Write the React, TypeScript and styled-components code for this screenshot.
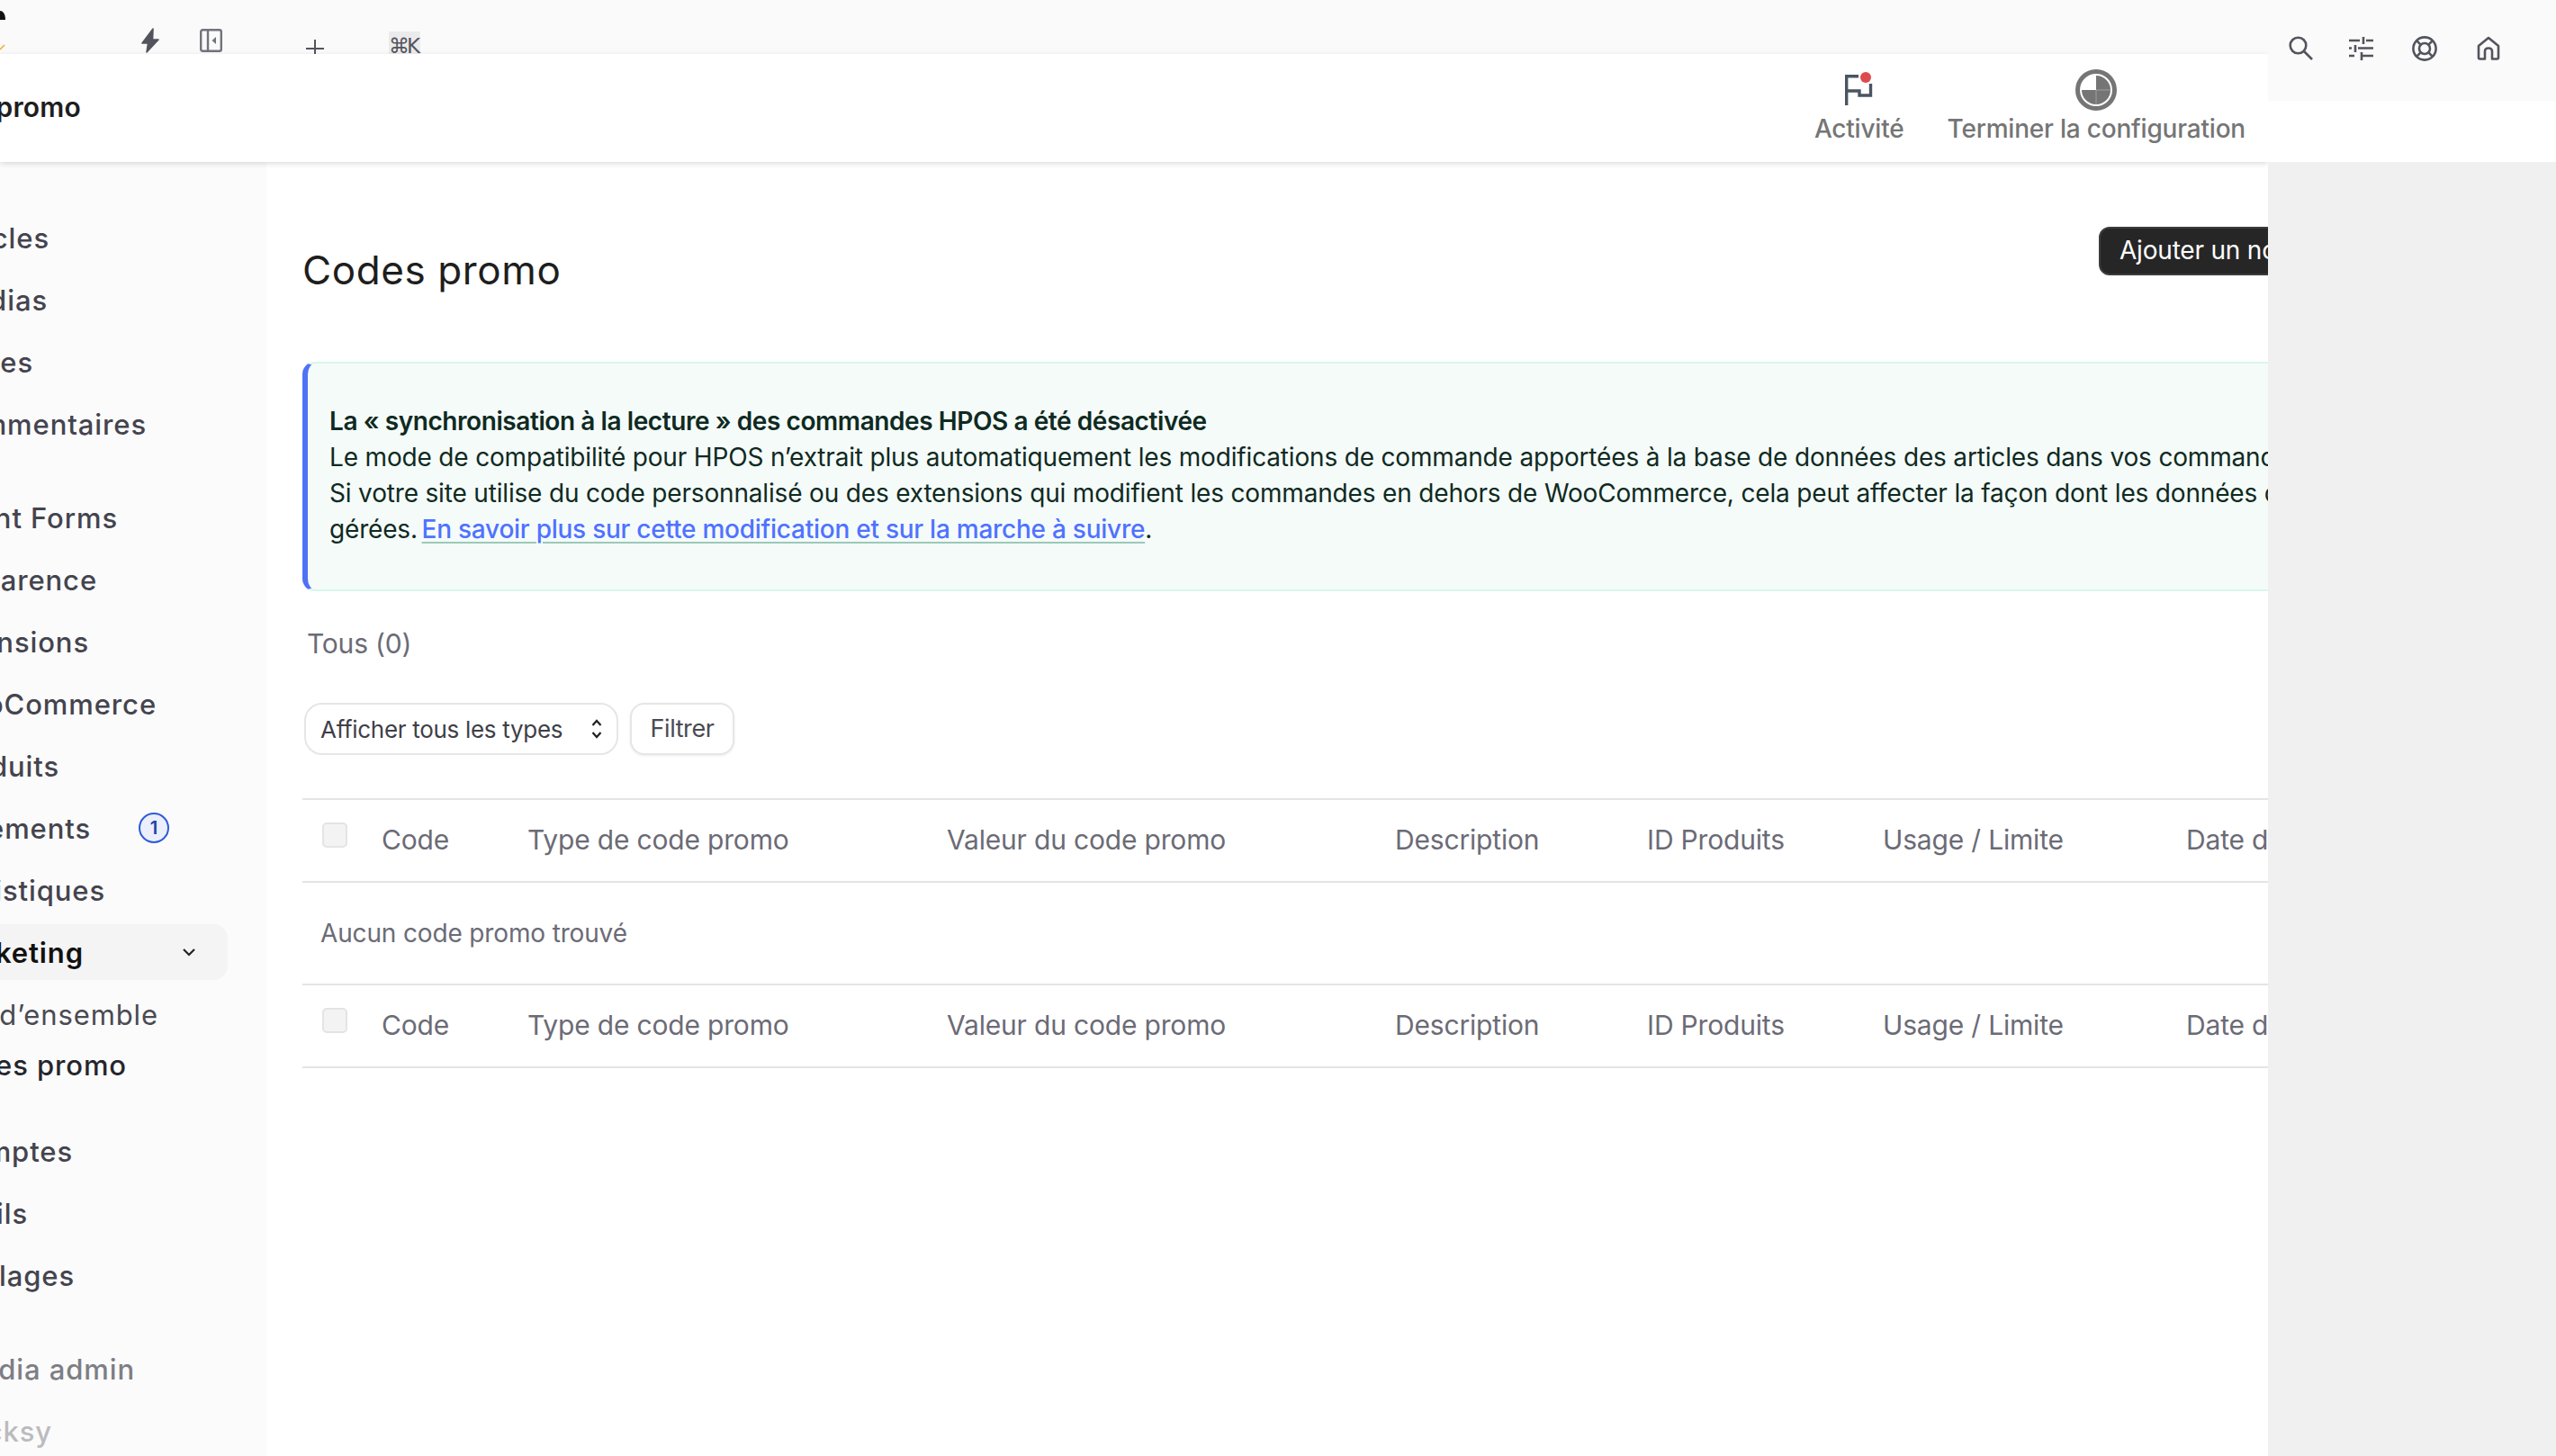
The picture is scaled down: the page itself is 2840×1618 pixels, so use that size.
import React from 'react'
import styled, { createGlobalStyle } from 'styled-components'

const FONT = `Inter, 'Noto Sans', 'Liberation Sans', sans-serif`

const GlobalStyle = createGlobalStyle`
  html, body {
    margin: 0;
    padding: 0;
    background: #f0f0f0;
  }
  body {
    font-family: ${FONT};
    overflow: hidden;
  }
  * {
    box-sizing: border-box;
  }
`

const Page = styled.div`
  display: flex;
  width: 2840px;
  height: 1618px;
  overflow: hidden;
`

const Frame = styled.div`
  flex: 0 0 2520px;
  display: flex;
  flex-direction: column;
  overflow: hidden;
  background: #fff;
`

const TopStrip = styled.div`
  flex: 0 0 60px;
  display: flex;
  align-items: flex-start;
  overflow: hidden;
  background: #fafafa;
`

const StripSlot = styled.div<{ $left: number; $top: number }>`
  flex: none;
  margin-left: ${p => p.$left}px;
  margin-top: ${p => p.$top}px;
  display: flex;
  color: #54545e;
`

const KeyHint = styled.span`
  flex: none;
  margin-left: 72px;
  margin-top: 35px;
  width: 35px;
  height: 40px;
  background: #ebebeb;
  color: #54545e;
  font-size: 23px;
  line-height: 32px;
  text-align: left;
  white-space: nowrap;
  font-family: 'DejaVu Sans', sans-serif;
  letter-spacing: -3px;
`

const Header = styled.header`
  flex: 0 0 120px;
  position: relative;
  z-index: 2;
  display: flex;
  align-items: center;
  justify-content: space-between;
  padding-right: 25px;
  background: #fff;
  box-shadow: 0 2px 6px rgba(0, 0, 0, 0.14);
`

const HeaderTitle = styled.div`
  display: flex;
  justify-content: flex-end;
  width: 90px;
  margin-top: -2px;
  white-space: nowrap;
  font-size: 30px;
  font-weight: 600;
  letter-spacing: 0.2px;
  color: #1e1e1e;
`

const HeaderActions = styled.div`
  display: flex;
  align-items: flex-end;
  gap: 48px;
`

const HeaderAction = styled.div`
  display: flex;
  flex-direction: column;
  align-items: center;
`

const ActionLabel = styled.span`
  font-size: 28px;
  line-height: 40px;
  font-weight: 500;
  letter-spacing: -0.2px;
  color: #757575;
  white-space: nowrap;
`

const Body = styled.div`
  flex: 1;
  display: flex;
  min-height: 0;
`

const Sidebar = styled.nav`
  flex: 0 0 296px;
  padding-top: 53px;
  background: #fbfbfb;
  overflow: hidden;
`

const NavGroup = styled.div`
  margin-bottom: 42px;
  display: flex;
  flex-direction: column;
  gap: 7px;
`

const NavItem = styled.div<{ $active?: boolean; $tone?: string }>`
  width: 253px;
  height: 62px;
  display: flex;
  align-items: center;
  border-radius: 0 16px 16px 0;
  font-size: 31px;
  font-weight: ${p => (p.$active ? 600 : 500)};
  letter-spacing: 0.9px;
  color: ${p => p.$tone || '#44444e'};
  background: ${p => (p.$active ? '#f4f4f4' : 'transparent')};
`

const NavLabel = styled.span<{ $end: number }>`
  flex: none;
  display: flex;
  justify-content: flex-end;
  width: ${p => p.$end}px;
  white-space: nowrap;
`

const NavBadge = styled.span`
  flex: none;
  margin-left: auto;
  margin-right: 65px;
  width: 34px;
  height: 34px;
  display: flex;
  align-items: center;
  justify-content: center;
  border: 2px solid #2f5bd8;
  border-radius: 50%;
  background: #eaeffb;
  color: #1d3fa8;
  font-size: 20px;
  font-weight: 600;
  letter-spacing: 0;
`

const NavChevron = styled.svg`
  flex: none;
  margin-left: auto;
  margin-right: 34px;
`

const SubList = styled.div`
  margin-top: 3px;
  margin-bottom: -5px;
`

const SubItem = styled.div<{ $current?: boolean }>`
  width: 253px;
  height: 56px;
  display: flex;
  align-items: center;
  font-size: 31px;
  font-weight: ${p => (p.$current ? 500 : 400)};
  letter-spacing: 0.9px;
  color: ${p => (p.$current ? '#26262c' : '#4a4a52')};
`

const Content = styled.main`
  flex: none;
  width: 2470px;
  margin-left: 40px;
  padding-top: 72px;
`

const TitleRow = styled.div`
  display: flex;
  align-items: flex-start;
  height: 96px;
  margin-bottom: 54px;
`

const Title = styled.h1`
  flex: 0 0 1996px;
  margin: 0;
  height: 96px;
  font-size: 44px;
  line-height: 96px;
  font-weight: 400;
  letter-spacing: 0.6px;
  color: #1e1e1e;
`

const AddButton = styled.button`
  flex: none;
  height: 54px;
  padding: 0 21px 2px;
  border: 2px solid #3c3c3c;
  border-radius: 12px;
  background: #262626;
  color: #fff;
  font-family: ${FONT};
  font-size: 28px;
  letter-spacing: -0.2px;
  white-space: nowrap;
`

const Notice = styled.div`
  width: 2300px;
  height: 255px;
  padding: 44px 28px 0 24px;
  border: 2px solid #d8f7ea;
  border-left: 6px solid #4f72f5;
  border-radius: 14px;
  background: #f5fbf9;
  color: #0f2a22;
  font-size: 28px;
  line-height: 40px;
`

const NoticeLine = styled.div<{ $bold?: boolean }>`
  white-space: nowrap;
  font-weight: ${p => (p.$bold ? 600 : 400)};
  letter-spacing: ${p => (p.$bold ? '-0.42px' : '-0.17px')};
`

const NoticeLink = styled.a`
  margin-left: -3px;
  color: #4f72ff;
  font-weight: 500;
  letter-spacing: -0.25px;
  text-decoration: underline;
  text-decoration-color: #9cc9b8;
  text-decoration-thickness: 2px;
  text-underline-offset: 4px;
`

const ViewLink = styled.div`
  margin: 38px 0 0 5px;
  font-size: 30px;
  line-height: 40px;
  letter-spacing: -0.2px;
  color: #6b6b76;
`

const FilterBar = styled.div`
  margin-top: 46px;
  display: flex;
  gap: 13px;
  height: 58px;
  padding-left: 2px;
`

const SelectBox = styled.div`
  flex: 0 0 349px;
  display: flex;
  align-items: center;
  justify-content: space-between;
  padding: 0 15px 0 16px;
  border: 2px solid #e6e6e6;
  border-radius: 20px;
  background: #fff;
  color: #3f3f48;
  font-size: 26px;
  letter-spacing: -0.3px;
`

const FilterButton = styled.div`
  flex: 0 0 116px;
  display: flex;
  align-items: center;
  justify-content: center;
  padding-bottom: 2px;
  border: 2px solid #e6e6e6;
  border-radius: 16px;
  background: #fff;
  box-shadow: 0 1px 3px rgba(0, 0, 0, 0.08);
  color: #4a4a52;
  font-size: 27px;
  letter-spacing: -0.4px;
`

const Table = styled.div`
  margin-top: 48px;
  border-top: 2px solid #e4e4e4;
`

const Row = styled.div`
  display: grid;
  grid-template-columns: 88px 162px 466px 498px 280px 262px 337px 1fr;
  align-items: center;
  height: 92px;
  padding-bottom: 2px;
  border-bottom: 2px solid #e4e4e4;
  font-size: 30px;
  letter-spacing: -0.18px;
  color: #6b6b76;
  white-space: nowrap;
`

const CheckCell = styled.div`
  padding-left: 22px;
  align-self: start;
  padding-top: 25px;
`

const CheckBox = styled.div`
  width: 28px;
  height: 28px;
  border: 2px solid #e4e4e4;
  border-radius: 5px;
  background: #f3f3f3;
`

const EmptyRow = styled.div`
  height: 114px;
  display: flex;
  align-items: center;
  padding-left: 20px;
  border-bottom: 2px solid #e4e4e4;
  font-size: 28px;
  letter-spacing: -0.15px;
  color: #6b6b76;
`

const SideColumn = styled.aside`
  flex: 1;
  display: flex;
  flex-direction: column;
`

const SideTools = styled.div`
  flex: 0 0 112px;
  display: flex;
  align-items: flex-start;
  gap: 43px;
  padding: 40px 0 0 23px;
  background: #fafafa;
`

const SearchIcon = styled.svg`
  margin-right: -3px;
`

const HomeIcon = styled.svg`
  margin-left: 1px;
`

const SideBlank = styled.div`
  flex: 0 0 68px;
  background: #fff;
`

const SideRest = styled.div`
  flex: 1;
  background: #f0f0f0;
`

const columns = ['Code', 'Type de code promo', 'Valeur du code promo', 'Description', 'ID Produits', 'Usage / Limite', 'Date d’expiration']

const HeadRow = () => (
  <Row>
    <CheckCell>
      <CheckBox />
    </CheckCell>
    {columns.map(c => (
      <span key={c}>{c}</span>
    ))}
  </Row>
)

const navTop = [
  { label: 'Articles', end: 55 },
  { label: 'Médias', end: 53 },
  { label: 'Pages', end: 37 },
  { label: 'Commentaires', end: 163 },
]

const navTools = [
  { label: 'Comptes', end: 81 },
  { label: 'Outils', end: 31 },
  { label: 'Réglages', end: 83 },
]

const navMiddle = [
  { label: 'Fluent Forms', end: 131 },
  { label: 'Apparence', end: 108 },
  { label: 'Extensions', end: 99 },
  { label: 'WooCommerce', end: 174 },
  { label: 'Produits', end: 66 },
]

export default function App() {
  return (
    <Page>
      <GlobalStyle />
      <Frame>
        <TopStrip>
          <StripSlot $left={0} $top={0}>
            <svg width="8" height="60" viewBox="0 0 8 60">
              <path d="M0 12 C3 12 6 15 6 22 L0 22 Z" fill="#111" />
              <path d="M0 55 L5 50" stroke="#f5a623" strokeWidth="1.5" fill="none" />
            </svg>
          </StripSlot>
          <StripSlot $left={149} $top={31}>
            <svg width="20" height="28" viewBox="0 0 20 28">
              <path
                d="M13 1 L1 17 H7.5 L6 27 L19 13 H12.5 Z"
                fill="currentColor"
                stroke="currentColor"
                strokeWidth="1.6"
                strokeLinejoin="round"
              />
            </svg>
          </StripSlot>
          <StripSlot $left={45} $top={32}>
            <svg width="25" height="26" viewBox="0 0 25 26" fill="none" stroke="#73737d" strokeWidth="2.4">
              <rect x="1.2" y="1.2" width="22.6" height="23.6" rx="2" />
              <path d="M9 1.2 V24.8" />
              <path d="M18 9 L13.5 13 L18 17 Z" fill="#73737d" stroke="none" />
            </svg>
          </StripSlot>
          <StripSlot $left={93} $top={44}>
            <svg width="20" height="20" viewBox="0 0 20 20" stroke="#54545e" strokeWidth="2">
              <path d="M0 10 H20 M10 0 V20" />
            </svg>
          </StripSlot>
          <KeyHint>⌘K</KeyHint>
        </TopStrip>
        <Header>
          <HeaderTitle>Codes promo</HeaderTitle>
          <HeaderActions>
            <HeaderAction>
              <svg width="32" height="43" viewBox="0 -3 32 43" fill="none" stroke="#4a5560" strokeWidth="3.4">
                <path d="M1.7 34 V1.7 H15 M1.7 18 H16 V23 H28.5 V10" />
                <circle cx="23" cy="3" r="6" fill="#dc4c4c" stroke="none" />
              </svg>
              <ActionLabel>Activité</ActionLabel>
            </HeaderAction>
            <HeaderAction>
              <svg width="46" height="46" viewBox="0 0 46 46">
                <circle cx="23" cy="23" r="20.5" fill="none" stroke="#757575" strokeWidth="5" />
                <path d="M23 7 A16 16 0 1 1 7 23 H23 Z" fill="#757575" />
                <path d="M23 23 H39 M23 23 V39" stroke="#a0a0a0" strokeWidth="1" />
              </svg>
              <ActionLabel>Terminer la configuration</ActionLabel>
            </HeaderAction>
          </HeaderActions>
        </Header>
        <Body>
          <Sidebar>
            <NavGroup>
              {navTop.map(i => (
                <NavItem key={i.label}>
                  <NavLabel $end={i.end}>{i.label}</NavLabel>
                </NavItem>
              ))}
            </NavGroup>
            <NavGroup>
              {navMiddle.map(i => (
                <NavItem key={i.label}>
                  <NavLabel $end={i.end}>{i.label}</NavLabel>
                </NavItem>
              ))}
              <NavItem>
                <NavLabel $end={101}>Paiements</NavLabel>
                <NavBadge>1</NavBadge>
              </NavItem>
              <NavItem>
                <NavLabel $end={117}>Statistiques</NavLabel>
              </NavItem>
              <NavItem $active $tone="#111">
                <NavLabel $end={93}>Marketing</NavLabel>
                <NavChevron width="18" height="18" viewBox="0 0 18 18" fill="none" stroke="#222" strokeWidth="2.2">
                  <path d="M3 6 L9 12 L15 6" />
                </NavChevron>
              </NavItem>
              <SubList>
                <SubItem>
                  <NavLabel $end={176}>Vue d’ensemble</NavLabel>
                </SubItem>
                <SubItem $current>
                  <NavLabel $end={141}>Codes promo</NavLabel>
                </SubItem>
              </SubList>
            </NavGroup>
            <NavGroup>
              {navTools.map(i => (
                <NavItem key={i.label}>
                  <NavLabel $end={i.end}>{i.label}</NavLabel>
                </NavItem>
              ))}
            </NavGroup>
            <NavGroup>
              <NavItem $tone="#7e7e85">
                <NavLabel $end={150}>Media admin</NavLabel>
              </NavItem>
              <NavItem $tone="#bbbbbf">
                <NavLabel $end={58}>Blocksy</NavLabel>
              </NavItem>
            </NavGroup>
          </Sidebar>
          <Content>
            <TitleRow>
              <Title>Codes promo</Title>
              <AddButton>Ajouter un nouveau code promo</AddButton>
            </TitleRow>
            <Notice>
              <NoticeLine $bold>La « synchronisation à la lecture » des commandes HPOS a été désactivée</NoticeLine>
              <NoticeLine>
                Le mode de compatibilité pour HPOS n’extrait plus automatiquement les modifications de commande apportées à la base de données des articles dans vos commandes.
              </NoticeLine>
              <NoticeLine>
                Si votre site utilise du code personnalisé ou des extensions qui modifient les commandes en dehors de WooCommerce, cela peut affecter la façon dont les données de vos commandes sont
              </NoticeLine>
              <NoticeLine>
                gérées. <NoticeLink>En savoir plus sur cette modification et sur la marche à suivre</NoticeLink>.
              </NoticeLine>
            </Notice>
            <ViewLink>Tous (0)</ViewLink>
            <FilterBar>
              <SelectBox>
                Afficher tous les types
                <svg width="14" height="24" viewBox="0 0 14 24" fill="none" stroke="#222" strokeWidth="2.2">
                  <path d="M2.5 8 L7 3 L11.5 8 M2.5 16 L7 21 L11.5 16" />
                </svg>
              </SelectBox>
              <FilterButton>Filtrer</FilterButton>
            </FilterBar>
            <Table>
              <HeadRow />
              <EmptyRow>Aucun code promo trouvé</EmptyRow>
              <HeadRow />
            </Table>
          </Content>
        </Body>
      </Frame>
      <SideColumn>
        <SideTools>
          <SearchIcon width="27" height="27" viewBox="0 0 27 27" fill="none" stroke="#54545e" strokeWidth="2.6">
            <circle cx="10.5" cy="10.5" r="8.8" />
            <path d="M17 17 L26 26" />
          </SearchIcon>
          <svg width="27" height="27" viewBox="0 0 27 27" fill="none" stroke="#54545e" strokeWidth="2.6">
            <path d="M0 5 H12 M19 5 H27 M16 1 V9 M0 13.5 H3 M10 13.5 H27 M7 10 V18 M0 22 H6 M14 22 H27 M14 18 V27" />
          </svg>
          <svg width="28" height="28" viewBox="0 0 28 28" fill="none" stroke="#54545e" strokeWidth="2.6">
            <circle cx="14" cy="14" r="12.6" />
            <circle cx="14" cy="14" r="6" />
            <path d="M5 5 L9.8 9.8 M23 5 L18.2 9.8 M5 23 L9.8 18.2 M23 23 L18.2 18.2" />
          </svg>
          <HomeIcon width="26" height="27" viewBox="0 0 26 27" fill="none" stroke="#54545e" strokeWidth="2.6" strokeLinejoin="round">
            <path d="M2 11 L13 2 L24 11 V24 Q24 25.5 22.5 25.5 H17 V17 Q17 13.5 13 13.5 Q9 13.5 9 17 V25.5 H3.5 Q2 25.5 2 24 Z" />
          </HomeIcon>
        </SideTools>
        <SideBlank />
        <SideRest />
      </SideColumn>
    </Page>
  )
}
